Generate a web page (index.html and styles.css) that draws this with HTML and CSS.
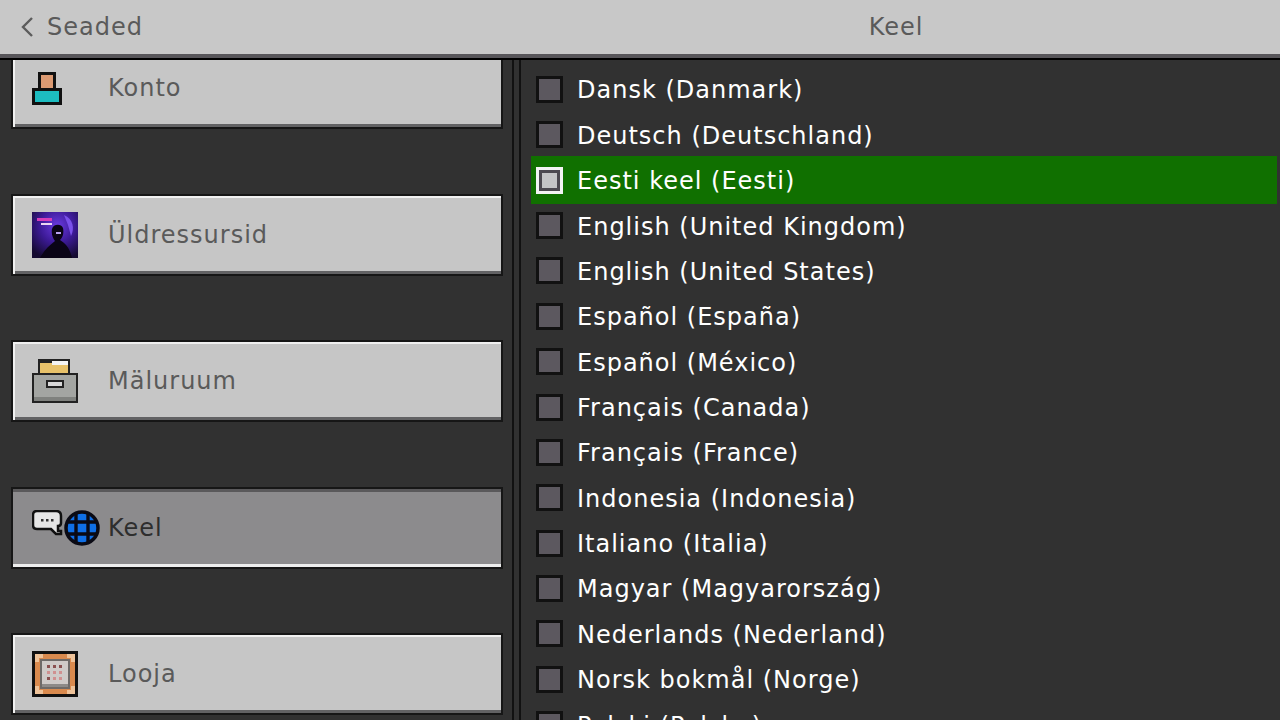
FILE: index.html
```html
<!DOCTYPE html>
<html lang="et">
<head>
    <meta charset="UTF-8">
    <meta name="viewport" content="width=device-width, initial-scale=1.0">
    <title>Keel</title>
    <link rel="stylesheet" href="styles.css">
</head>
<body>

<header class="top-bar">
    <div class="back-link">
        <svg class="back-icon" width="14" height="20" viewBox="0 0 14 20">
            <path d="M12 1 L3 10 L12 19" fill="none" stroke="#5c5c5c" stroke-width="2.4"/>
        </svg>
        <span>Seaded</span>
    </div>
    <div class="page-title">Keel</div>
</header>

<main class="content">
    <nav class="side-panel">
        <div class="side-list">
            <div class="side-btn">
                <span class="side-icon">
                    <svg width="30" height="33" viewBox="0 0 30 33" shape-rendering="crispEdges">
                        <rect x="6" y="0" width="18" height="20" fill="#111"/>
                        <rect x="9" y="3" width="12" height="14" fill="#dc9a72"/>
                        <rect x="0" y="16" width="30" height="17" fill="#111"/>
                        <rect x="3" y="19" width="24" height="11" fill="#1dbcc0"/>
                    </svg>
                </span>
                <span>Konto</span>
            </div>

            <div class="side-btn">
                <span class="side-icon">
                    <svg width="46" height="46" viewBox="0 0 46 46">
                        <defs>
                            <radialGradient id="skin-glow" cx="0.55" cy="0.3" r="0.75">
                                <stop offset="0" stop-color="#6a3ae0"/>
                                <stop offset="0.5" stop-color="#3c1a96"/>
                                <stop offset="1" stop-color="#140a30"/>
                            </radialGradient>
                        </defs>
                        <rect width="46" height="46" fill="url(#skin-glow)"/>
                        <path d="M20 17 C21 12 29 11 31 16 C32 21 31 25 28 28 C33 31 38 36 40 46 L8 46 C12 38 18 33 23 29 C21 26 19 22 20 17 Z" fill="#0a0416"/>
                        <path d="M32 3 C41 7 43 16 39 24 L36 13 Z" fill="#7a50ea"/>
                        <rect x="5" y="6" width="15" height="3" fill="#d43cb8"/>
                        <rect x="9" y="11" width="11" height="2" fill="#ecd6f2"/>
                        <rect x="24" y="20" width="5" height="2" fill="#b9a2f0"/>
                    </svg>
                </span>
                <span>Üldressursid</span>
            </div>

            <div class="side-btn">
                <span class="side-icon">
                    <svg width="46" height="44" viewBox="0 0 46 44" shape-rendering="crispEdges">
                        <rect x="6" y="0" width="32" height="16" fill="#222"/>
                        <rect x="8" y="4" width="28" height="12" fill="#e8c26a"/>
                        <rect x="20" y="2" width="16" height="4" fill="#f4f4f4"/>
                        <rect x="0" y="14" width="46" height="30" fill="#222"/>
                        <rect x="2" y="16" width="42" height="26" fill="#a3a5a2"/>
                        <rect x="2" y="38" width="42" height="4" fill="#7f817e"/>
                        <rect x="14" y="21" width="18" height="8" fill="#222"/>
                        <rect x="16" y="23" width="14" height="4" fill="#d8d8d8"/>
                    </svg>
                </span>
                <span>Mäluruum</span>
            </div>

            <div class="side-btn active">
                <span class="side-icon">
                    <svg width="68" height="36" viewBox="0 0 68 36">
                        <path d="M5 1 H24 Q29 1 29 6 V13 Q29 16 26 16 V21 H29 V24 H24 L19 19 H5 Q1 19 1 15 V5 Q1 1 5 1 Z" fill="#e6e6e6" stroke="#111" stroke-width="2.5"/>
                        <rect x="9" y="9" width="2.5" height="2.5" fill="#333"/>
                        <rect x="14" y="9" width="2.5" height="2.5" fill="#333"/>
                        <rect x="19" y="9" width="2.5" height="2.5" fill="#333"/>
                        <circle cx="50" cy="18" r="16" fill="#0f6fe6" stroke="#0a0a14" stroke-width="3.5"/>
                        <path d="M44 3 V33 M56 3 V33 M35 12 H65 M35 24 H65" fill="none" stroke="#0a0a14" stroke-width="3.4"/>
                    </svg>
                </span>
                <span>Keel</span>
            </div>

            <div class="side-btn">
                <span class="side-icon">
                    <svg width="46" height="46" viewBox="0 0 46 46" shape-rendering="crispEdges">
                        <rect width="46" height="46" fill="#111"/>
                        <rect x="3" y="3" width="40" height="40" fill="#d98a4e"/>
                        <rect x="3" y="3" width="8" height="4" fill="#eec39a"/>
                        <rect x="3" y="3" width="4" height="8" fill="#eec39a"/>
                        <rect x="35" y="3" width="8" height="4" fill="#eec39a"/>
                        <rect x="39" y="3" width="4" height="8" fill="#eec39a"/>
                        <rect x="3" y="39" width="8" height="4" fill="#eec39a"/>
                        <rect x="3" y="35" width="4" height="8" fill="#eec39a"/>
                        <rect x="35" y="39" width="8" height="4" fill="#eec39a"/>
                        <rect x="39" y="35" width="4" height="8" fill="#eec39a"/>
                        <rect x="8" y="8" width="30" height="30" fill="#6e6a68"/>
                        <rect x="10" y="10" width="26" height="26" fill="#cfcac8"/>
                        <rect x="10" y="33" width="26" height="3" fill="#8d8a88"/>
                        <rect x="15" y="14" width="3" height="3" fill="#8a5050"/>
                        <rect x="21" y="14" width="3" height="3" fill="#8a5050"/>
                        <rect x="27" y="14" width="3" height="3" fill="#8a5050"/>
                        <rect x="15" y="20" width="3" height="3" fill="#d09090"/>
                        <rect x="21" y="20" width="3" height="3" fill="#d09090"/>
                        <rect x="27" y="20" width="3" height="3" fill="#d09090"/>
                        <rect x="15" y="26" width="3" height="3" fill="#8a5050"/>
                        <rect x="21" y="26" width="3" height="3" fill="#d09090"/>
                        <rect x="27" y="26" width="3" height="3" fill="#d09090"/>
                    </svg>
                </span>
                <span>Looja</span>
            </div>
        </div>
    </nav>

    <section class="lang-panel" id="lang-list"></section>
</main>

<script>
    // Language rows
    const languages = [
        "Dansk (Danmark)", "Deutsch (Deutschland)", "Eesti keel (Eesti)",
        "English (United Kingdom)", "English (United States)", "Español (España)",
        "Español (México)", "Français (Canada)", "Français (France)",
        "Indonesia (Indonesia)", "Italiano (Italia)", "Magyar (Magyarország)",
        "Nederlands (Nederland)", "Norsk bokmål (Norge)", "Polski (Polska)"
    ];
    const langList = document.getElementById("lang-list");
    languages.forEach(name => {
        const row = document.createElement("div");
        row.className = name === "Eesti keel (Eesti)" ? "lang-row selected" : "lang-row";
        const box = document.createElement("span");
        box.className = "radio";
        const label = document.createElement("span");
        label.className = "lang-name";
        label.textContent = name;
        row.appendChild(box);
        row.appendChild(label);
        langList.appendChild(row);
    });
</script>

</body>
</html>
```

FILE: styles.css
```css
* {
    margin: 0;
    padding: 0;
    box-sizing: border-box;
}

body {
    width: 1280px;
    height: 720px;
    overflow: hidden;
    background-color: #313131;
    font-family: "DejaVu Sans", sans-serif;
    font-size: 24px;
    letter-spacing: 1px;
}

.top-bar {
    height: 60px;
    display: grid;
    grid-template-columns: 512px 1fr;
    align-items: center;
    padding-bottom: 4px;
    background-color: #c8c8c8;
    color: #5a5a5a;
    border-bottom: 2px solid #000;
    box-shadow: inset 0 -4px 0 #58565a;
}

.back-link {
    display: flex;
    align-items: center;
    gap: 13px;
    padding-left: 20px;
}

.page-title {
    text-align: center;
}

.content {
    height: 660px;
    display: flex;
}

.side-panel {
    width: 514px;
    height: 100%;
    overflow: hidden;
    border-right: 2px solid #111;
    padding: 0 9px 0 11px;
}

.side-list {
    display: flex;
    flex-direction: column;
    gap: 64.6px;
    margin-top: -13px;
}

.side-btn {
    height: 82px;
    display: flex;
    align-items: center;
    padding-left: 19px;
    background-color: #c6c6c6;
    color: #5a5a5a;
    border: 2px solid #161616;
    box-shadow: inset 2px 2px 0 #f0f0f0, inset 0 -3px 0 #626264;
}

.side-btn.active {
    background-color: #8c8b8d;
    color: #2e2e2e;
    box-shadow: inset 0 3px 0 #5a595b, inset 0 -3px 0 #ededed;
}

.side-icon {
    width: 76px;
    flex-shrink: 0;
    display: flex;
    align-items: center;
}

.lang-panel {
    flex: 1;
    margin-left: 5px;
    border-left: 2px solid #111;
    padding: 6.8px 3px 0 10px;
    overflow: hidden;
    color: #fff;
}

.lang-row {
    height: 45.36px;
    display: flex;
    align-items: center;
    gap: 14px;
    padding-left: 5px;
}

.lang-row.selected {
    height: 48px;
    margin: -1.32px 0;
    background-color: #107000;
}

.lang-name {
    padding-top: 2px;
}

.radio {
    width: 27px;
    height: 27px;
    flex-shrink: 0;
    background-color: #5c585f;
    border: 3px solid #111;
}

.selected .radio {
    border-color: #f4f4f4;
    background-color: #c4c4c6;
    box-shadow: inset 0 0 0 3px #4c4850;
}
```
